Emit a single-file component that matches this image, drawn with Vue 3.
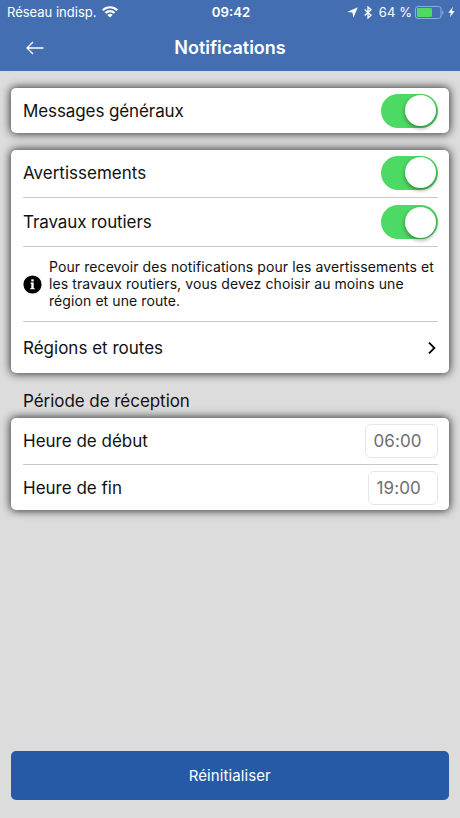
<script setup>
import { ref } from "vue";

const general = ref(true);
const warnings = ref(true);
const roadworks = ref(true);
const startTime = ref("06:00");
const endTime = ref("19:00");

function reset() {
  general.value = true;
  warnings.value = true;
  roadworks.value = true;
  startTime.value = "06:00";
  endTime.value = "19:00";
}
</script>

<template>
  <main class="screen">
    <header class="header">
      <div class="status">
        <div class="status-left">
          <span class="carrier">Réseau indisp.</span>
          <svg class="wifi" width="16" height="12" viewBox="0 0 16 12">
            <g fill="none" stroke="#fff" stroke-width="2.1">
              <path d="M0.8 4.3a10.2 10.2 0 0 1 14.4 0" />
              <path d="M3.4 7a6.5 6.5 0 0 1 9.2 0" />
            </g>
            <path d="M5.4 9a3.7 3.7 0 0 1 5.2 0L8 11.6z" fill="#fff" />
          </svg>
        </div>
        <span class="clock">09:42</span>
        <div class="status-right">
          <svg width="11" height="11" viewBox="0 0 11 11">
            <path d="M10.8 0.2L6.3 10.8L5.5 5.5L0.2 5z" fill="#fff" />
          </svg>
          <svg class="bluetooth" width="8" height="13" viewBox="0 0 8 13">
            <path
              d="M0.7 3.5L7 9.3L4 12V1L7 3.7L0.7 9.5"
              fill="none"
              stroke="#fff"
              stroke-width="1.3"
            />
          </svg>
          <span class="percent">64 %</span>
          <svg class="battery" width="29" height="13" viewBox="0 0 29 13">
            <rect
              x="0.5"
              y="0.5"
              width="25.5"
              height="12"
              rx="2.5"
              fill="none"
              stroke="#91aeda"
            />
            <rect x="2" y="2" width="15" height="9" rx="1" fill="#4cd964" />
            <path d="M27.3 4.2q1.3 0.6 1.3 2.3t-1.3 2.3z" fill="#91aeda" />
          </svg>
          <svg class="bolt" width="7" height="12" viewBox="0 0 8 12">
            <path d="M5.6 0L0.4 6.8H3.4L2.2 12L7.6 4.9H4.5z" fill="#fff" />
          </svg>
        </div>
      </div>
      <div class="nav">
        <svg class="back" width="18" height="14" viewBox="0 0 18 14">
          <path
            d="M7 1L1 7l6 6M1 7h16.5"
            fill="none"
            stroke="#fff"
            stroke-width="1.3"
          />
        </svg>
        <h1>Notifications</h1>
      </div>
    </header>

    <section class="card general">
      <div class="row">
        <span class="tight">Messages généraux</span>
        <button
          :class="['toggle', { on: general }]"
          @click="general = !general"
        ></button>
      </div>
    </section>

    <section class="card alerts">
      <div class="row warnings">
        <span>Avertissements</span>
        <button
          :class="['toggle', { on: warnings }]"
          @click="warnings = !warnings"
        ></button>
      </div>
      <div class="row roadworks">
        <span class="tight">Travaux routiers</span>
        <button
          :class="['toggle', { on: roadworks }]"
          @click="roadworks = !roadworks"
        ></button>
      </div>
      <div class="row info">
        <svg width="19" height="19" viewBox="0 0 19 19">
          <circle cx="9.5" cy="9.5" r="9.1" fill="#000" />
          <rect x="8.3" y="4.3" width="2.4" height="2.2" fill="#fff" />
          <path d="M7.6 7.6h3.1v5.3h0.9v1.3H7.4v-1.3h0.9V8.9h-0.7z" fill="#fff" />
        </svg>
        <p>
          Pour recevoir des notifications pour les avertissements et<br />
          les travaux routiers, vous devez choisir au moins une<br />
          région et une route.
        </p>
      </div>
      <div class="row regions">
        <span>Régions et routes</span>
        <svg class="chevron" width="8" height="12" viewBox="0 0 8 12">
          <path
            d="M1 0.7L6.4 6L1 11.3"
            fill="none"
            stroke="#000"
            stroke-width="1.8"
          />
        </svg>
      </div>
    </section>

    <h2>Période de réception</h2>
    <section class="card period">
      <div class="row">
        <span>Heure de début</span>
        <span class="time start">{{ startTime }}</span>
      </div>
      <div class="row end-row">
        <span>Heure de fin</span>
        <span class="time end">{{ endTime }}</span>
      </div>
    </section>

    <button class="reset" @click="reset">Réinitialiser</button>
  </main>
</template>

<style>
body {
  margin: 0;
}
</style>

<style scoped>
.screen {
  display: flex;
  flex-direction: column;
  box-sizing: border-box;
  height: 818px;
  padding-bottom: 18px;
  background: #dcdcdc;
  color: #111;
  font-family: Inter, "Liberation Sans", sans-serif;
  font-size: 17px;
}
.header {
  height: 71px;
  background: #436fb2;
  color: #fff;
}
.status {
  display: grid;
  grid-template-columns: 1fr auto 1fr;
  align-items: center;
  height: 24px;
  padding: 0 5px 0 7px;
  font-size: 13.5px;
}
.status-left,
.status-right {
  display: flex;
  align-items: center;
}
.status-right {
  justify-content: flex-end;
}
.carrier {
  font-size: 13px;
}
.wifi {
  margin-left: 6px;
}
.clock {
  font-size: 13.2px;
  font-weight: 600;
}
.percent {
  font-size: 13px;
  letter-spacing: 0.1px;
}
.bluetooth {
  margin: 0 7px 0 6px;
}
.battery {
  margin: 0 4px 0 3px;
}
.nav {
  display: grid;
  grid-template-columns: 1fr auto 1fr;
  align-items: center;
  height: 47px;
}
.back {
  margin-left: 26px;
}
h1 {
  margin: -1px 0 0;
  font-size: 18px;
  font-weight: 600;
}
.card {
  margin: 0 11.5px 0 11px;
  padding: 0 11px 0 12px;
  border-radius: 5px;
  background: #fff;
  box-shadow: 0 0 9px 1px rgba(0, 0, 0, 0.75);
}
.general,
.alerts {
  margin-top: 17px;
}
.row {
  display: flex;
  align-items: center;
  justify-content: space-between;
  box-sizing: border-box;
  height: 45px;
}
.row + .row {
  border-top: 1px solid #c9c9c9;
}
.tight {
  letter-spacing: -0.1px;
}
.alerts .row {
  height: 47px;
}
.alerts .warnings {
  padding-bottom: 2px;
}
.alerts .roadworks {
  height: 49px;
}
.alerts .info {
  justify-content: flex-start;
  height: 75px;
}
.info p {
  margin: -2px 0 0 7px;
  font-size: 14px;
  line-height: 17px;
  letter-spacing: 0.085px;
  white-space: nowrap;
}
.alerts .regions {
  height: 52px;
}
.chevron {
  margin-right: 2px;
}
.toggle {
  width: 57px;
  height: 34px;
  padding: 0;
  border: none;
  border-radius: 17px;
  background: #e5e5e5;
}
.toggle::after {
  content: "";
  display: block;
  width: 31px;
  height: 31px;
  margin-left: 2px;
  border-radius: 50%;
  background: #fff;
  box-shadow: 0 2px 4px rgba(0, 0, 0, 0.4);
}
.toggle.on {
  background: #4cd964;
}
.toggle.on::after {
  margin-left: 24px;
}
h2 {
  margin: 17px 0 6px 23px;
  font-size: 17px;
  font-weight: 400;
  line-height: 22px;
  letter-spacing: -0.05px;
}
.period .row {
  height: 46px;
}
.period .end-row {
  padding-top: 1px;
}
.time {
  box-sizing: border-box;
  height: 34px;
  border: 1px solid #e6e6e6;
  border-radius: 6px;
  color: #6e6e6e;
  font-size: 17px;
  line-height: 32px;
  letter-spacing: 0.1px;
}
.start {
  width: 73px;
  padding-left: 8px;
}
.end {
  width: 70px;
  padding-left: 8px;
}
.reset {
  height: 49px;
  margin: auto 11.5px 0 11px;
  border: none;
  border-radius: 5px;
  background: #265aa6;
  color: #fff;
  font-family: inherit;
  font-size: 15px;
  letter-spacing: 0.1px;
}
</style>
